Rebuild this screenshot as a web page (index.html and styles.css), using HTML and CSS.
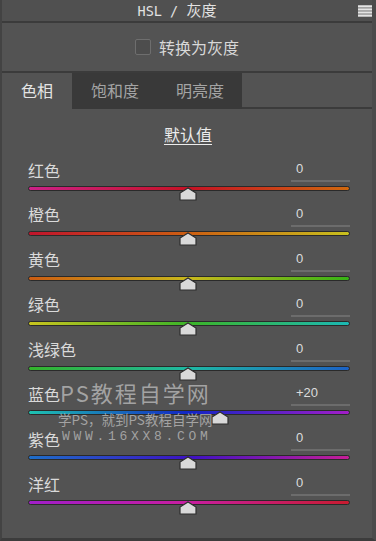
FILE: index.html
```html
<!DOCTYPE html>
<html lang="zh">
<head>
<meta charset="utf-8">
<title>HSL / 灰度</title>
<link rel="stylesheet" href="styles.css">
</head>
<body>
<div class="panel">
  <div class="header">
    <span></span>
    <span class="title"><span class="mono">HSL / </span>灰度</span>
    <span class="menu">
      <svg width="14" height="12" viewBox="0 0 14 12"><rect x="0" y="0" width="14" height="12" fill="#9a9a9a"/><rect x="0" y="0.5" width="14" height="1.6" fill="#e4e4e4"/><rect x="0" y="3.6" width="14" height="1.6" fill="#e4e4e4"/><rect x="0" y="6.7" width="14" height="1.6" fill="#e4e4e4"/><rect x="0" y="9.8" width="14" height="1.6" fill="#e4e4e4"/></svg>
    </span>
  </div>
  <div class="gray-row">
    <span class="checkbox"></span>
    <span class="gray-label">转换为灰度</span>
  </div>
  <div class="tabs">
    <div class="tab active">色相</div>
    <div class="tab">饱和度</div>
    <div class="tab">明亮度</div>
    <div class="tab-fill"></div>
  </div>
  <div class="defaults"><span class="defaults-link">默认值</span></div>
  <div class="rows">
    <div class="row">
      <div class="row-head"><span class="label">红色</span><span class="value">0</span></div>
      <div class="slider"><div class="track t-red"></div><svg class="thumb" style="left:calc(50% - 10px)" width="18" height="14" viewBox="0 0 18 14"><path d="M1 13 V6 L9 1 L17 6 V13 Z" fill="#d9d9d9" stroke="#2e2e2e" stroke-width="1.2"/></svg></div>
    </div>
    <div class="row">
      <div class="row-head"><span class="label">橙色</span><span class="value">0</span></div>
      <div class="slider"><div class="track t-orange"></div><svg class="thumb" style="left:calc(50% - 10px)" width="18" height="14" viewBox="0 0 18 14"><path d="M1 13 V6 L9 1 L17 6 V13 Z" fill="#d9d9d9" stroke="#2e2e2e" stroke-width="1.2"/></svg></div>
    </div>
    <div class="row">
      <div class="row-head"><span class="label">黄色</span><span class="value">0</span></div>
      <div class="slider"><div class="track t-yellow"></div><svg class="thumb" style="left:calc(50% - 10px)" width="18" height="14" viewBox="0 0 18 14"><path d="M1 13 V6 L9 1 L17 6 V13 Z" fill="#d9d9d9" stroke="#2e2e2e" stroke-width="1.2"/></svg></div>
    </div>
    <div class="row">
      <div class="row-head"><span class="label">绿色</span><span class="value">0</span></div>
      <div class="slider"><div class="track t-green"></div><svg class="thumb" style="left:calc(50% - 10px)" width="18" height="14" viewBox="0 0 18 14"><path d="M1 13 V6 L9 1 L17 6 V13 Z" fill="#d9d9d9" stroke="#2e2e2e" stroke-width="1.2"/></svg></div>
    </div>
    <div class="row">
      <div class="row-head"><span class="label">浅绿色</span><span class="value">0</span></div>
      <div class="slider"><div class="track t-aqua"></div><svg class="thumb" style="left:calc(50% - 10px)" width="18" height="14" viewBox="0 0 18 14"><path d="M1 13 V6 L9 1 L17 6 V13 Z" fill="#d9d9d9" stroke="#2e2e2e" stroke-width="1.2"/></svg></div>
    </div>
    <div class="row">
      <div class="row-head"><span class="label">蓝色</span><span class="value">+20</span></div>
      <div class="slider"><div class="track t-blue"></div><svg class="thumb" style="left:calc(60% - 10px)" width="18" height="14" viewBox="0 0 18 14"><path d="M1 13 V6 L9 1 L17 6 V13 Z" fill="#d9d9d9" stroke="#2e2e2e" stroke-width="1.2"/></svg></div>
    </div>
    <div class="row">
      <div class="row-head"><span class="label">紫色</span><span class="value">0</span></div>
      <div class="slider"><div class="track t-purple"></div><svg class="thumb" style="left:calc(50% - 10px)" width="18" height="14" viewBox="0 0 18 14"><path d="M1 13 V6 L9 1 L17 6 V13 Z" fill="#d9d9d9" stroke="#2e2e2e" stroke-width="1.2"/></svg></div>
    </div>
    <div class="row">
      <div class="row-head"><span class="label">洋红</span><span class="value">0</span></div>
      <div class="slider"><div class="track t-magenta"></div><svg class="thumb" style="left:calc(50% - 10px)" width="18" height="14" viewBox="0 0 18 14"><path d="M1 13 V6 L9 1 L17 6 V13 Z" fill="#d9d9d9" stroke="#2e2e2e" stroke-width="1.2"/></svg></div>
    </div>
  </div>
  <div class="watermark">
    <div class="wm-big">PS教程自学网</div>
    <div class="wm-mid">学PS，就到PS教程自学网</div>
    <div class="wm-url">WWW.16XX8.COM</div>
  </div>
</div>
</body>
</html>
```

FILE: styles.css
```css
* { box-sizing: border-box; }
html, body { margin: 0; padding: 0; }
body {
  background: #535353;
  font-family: "Noto Sans CJK SC", "Noto Sans", sans-serif;
  color: #d6d6d6;
}
.panel {
  position: relative;
  width: 376px;
  height: 541px;
  background: #535353;
  border-left: 2px solid #434343;
  border-right: 4px solid #4b4b4b;
  border-bottom: 3px solid #3c3c3c;
  overflow: hidden;
}
.header {
  height: 23px;
  display: grid;
  grid-template-columns: 1fr auto 1fr;
  align-items: center;
  background: #505050;
  border-bottom: 2px solid #3b3b3b;
  padding-bottom: 1px;
}
.title {
  font-size: 15px;
  line-height: 20px;
  color: #e2e2e2;
  padding-right: 20px;
}
.mono {
  font-family: "DejaVu Sans Mono", "Liberation Mono", monospace;
  font-size: 13.5px;
}
.menu {
  justify-self: end;
  display: flex;
  align-items: center;
  height: 20px;
}
.menu svg { display: block; }
.gray-row {
  height: 50px;
  display: flex;
  align-items: center;
  justify-content: center;
  gap: 8px;
  border-bottom: 2px solid #3b3b3b;
  padding-bottom: 1px;
}
.checkbox {
  width: 16px;
  height: 16px;
  border: 1.5px solid #6e6e6e;
  border-radius: 2px;
  background: #4d4d4d;
}
.gray-label {
  font-size: 16px;
  line-height: 20px;
  color: #d8d8d8;
}
.tabs {
  height: 36px;
  display: flex;
}
.tab {
  display: flex;
  align-items: center;
  justify-content: center;
  font-size: 16px;
  color: #a4a4a4;
  background: #393939;
  padding-bottom: 2px;
}
.tab:nth-child(1) { width: 70px; }
.tab:nth-child(2) { width: 86px; }
.tab:nth-child(3) { width: 84px; }
.tab.active {
  background: #535353;
  color: #e4e4e4;
}
.tab-fill {
  flex: 1;
  border-bottom: 2px solid #3b3b3b;
}
.defaults {
  height: 49px;
  padding-top: 13px;
  text-align: center;
}
.defaults-link {
  font-size: 16px;
  line-height: 20px;
  color: #ececec;
  text-decoration: underline;
  text-underline-offset: 3px;
  text-decoration-thickness: 1px;
  padding-left: 2px;
}
.rows {
  display: flex;
  flex-direction: column;
}
.row {
  height: 44.9px;
}
.row-head {
  height: 24px;
  display: flex;
  justify-content: space-between;
  align-items: center;
  padding: 0 22px 0 26px;
}
.label {
  font-size: 16px;
  line-height: 22px;
  color: #dadada;
  margin-top: -1px;
}
.value {
  width: 59px;
  height: 24px;
  border-bottom: 2px solid #6c6c6c;
  padding-left: 5px;
  padding-top: 2px;
  font-family: "Liberation Sans", Arial, sans-serif;
  font-size: 13px;
  line-height: 18px;
  color: #dcdcdc;
}
.slider {
  position: relative;
  height: 20.9px;
  margin: 0 22px 0 26px;
}
.track {
  margin-top: 4px;
  height: 5px;
  border-radius: 3px;
  border: 1px solid #2a2a2a;
}
.thumb {
  position: absolute;
  top: 1px;
  display: block;
}
.t-red { background: linear-gradient(to right, #cc2188, #c51224 50%, #d0680e); }
.t-orange { background: linear-gradient(to right, #c0142c, #cc5f12 50%, #c8c01e); }
.t-yellow { background: linear-gradient(to right, #cc5c12, #c8b81c 50%, #36b416); }
.t-green { background: linear-gradient(to right, #c8c41e, #3cb428 50%, #1cb8b4); }
.t-aqua { background: linear-gradient(to right, #34b42a, #1eb8a4 50%, #1c62c6); }
.t-blue { background: linear-gradient(to right, #1ec2b0, #1224c4 50%, #a21ec8); }
.t-purple { background: linear-gradient(to right, #1e6ec8, #3c12c4 50%, #c61e98); }
.t-magenta { background: linear-gradient(to right, #a01ec8, #c81ea0 50%, #c81c30); }
.watermark {
  position: absolute;
  left: 56px;
  top: 378px;
  color: rgba(190, 190, 190, 0.75);
  pointer-events: none;
}
.wm-big {
  font-size: 22px;
  line-height: 28px;
  letter-spacing: 2px;
  padding-left: 2px;
}
.wm-mid {
  font-size: 13.5px;
  line-height: 15px;
  margin-top: 6px;
}
.wm-url {
  font-family: "Liberation Mono", monospace;
  font-size: 13px;
  line-height: 15px;
  margin-top: 2px;
  letter-spacing: 3.7px;
  padding-left: 4px;
}
```
